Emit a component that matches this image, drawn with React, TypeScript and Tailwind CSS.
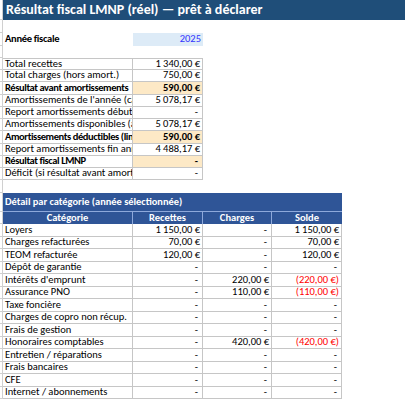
import React from "react";

const G = "border-[#c6c6c6]";

type CellProps = {
  w: string;
  className?: string;
  children?: React.ReactNode;
};

function Cell({ w, className = "", children }: CellProps) {
  return (
    <div
      className={`${w} shrink-0 h-full box-border overflow-hidden whitespace-nowrap flex items-center px-[2px] ${className}`}
    >
      {children}
    </div>
  );
}

function Margin({ line = true }: { line?: boolean }) {
  return (
    <div
      className={`w-[3px] shrink-0 h-full box-border border-r border-[#d0d0d0] ${line ? "border-b" : ""}`}
    />
  );
}

const summary: { label: string; value: string; hl?: boolean }[] = [
  { label: "Total recettes", value: "1 340,00 €" },
  { label: "Total charges (hors amort.)", value: "750,00 €" },
  { label: "Résultat avant amortissements", value: "590,00 €", hl: true },
  { label: "Amortissements de l'année (calculés)", value: "5 078,17 €" },
  { label: "Report amortissements début d'année", value: "-" },
  { label: "Amortissements disponibles (année + report)", value: "5 078,17 €" },
  { label: "Amortissements déductibles (limités)", value: "590,00 €", hl: true },
  { label: "Report amortissements fin année", value: "4 488,17 €" },
  { label: "Résultat fiscal LMNP", value: "-", hl: true },
  { label: "Déficit (si résultat avant amortissements < 0)", value: "-" },
];
const summaryH = [12, 12, 13, 12, 12, 12, 13, 12, 12, 12];

const detail: { cat: string; rec: string; ch: string; solde: string; neg?: boolean }[] = [
  { cat: "Loyers", rec: "1 150,00 €", ch: "-", solde: "1 150,00 €" },
  { cat: "Charges refacturées", rec: "70,00 €", ch: "-", solde: "70,00 €" },
  { cat: "TEOM refacturée", rec: "120,00 €", ch: "-", solde: "120,00 €" },
  { cat: "Dépôt de garantie", rec: "-", ch: "-", solde: "-" },
  { cat: "Intérêts d'emprunt", rec: "-", ch: "220,00 €", solde: "(220,00 €)", neg: true },
  { cat: "Assurance PNO", rec: "-", ch: "110,00 €", solde: "(110,00 €)", neg: true },
  { cat: "Taxe foncière", rec: "-", ch: "-", solde: "-" },
  { cat: "Charges de copro non récup.", rec: "-", ch: "-", solde: "-" },
  { cat: "Frais de gestion", rec: "-", ch: "-", solde: "-" },
  { cat: "Honoraires comptables", rec: "-", ch: "420,00 €", solde: "(420,00 €)", neg: true },
  { cat: "Entretien / réparations", rec: "-", ch: "-", solde: "-" },
  { cat: "Frais bancaires", rec: "-", ch: "-", solde: "-" },
  { cat: "CFE", rec: "-", ch: "-", solde: "-" },
  { cat: "Internet / abonnements", rec: "-", ch: "-", solde: "-" },
];

function Val({ v }: { v: string }) {
  return v === "-" ? <span className="pr-[2px]">-</span> : <span>{v}</span>;
}

export default function App() {
  return (
    <div
      className="w-[405px] h-[400px] overflow-hidden bg-white text-black text-[10.5px] leading-none"
      style={{ fontFamily: "Carlito, Lato, 'Liberation Sans', sans-serif" }}
    >
      {/* Title row */}
      <div className="flex h-[20px]">
        <Margin />
        <div className="flex-1 bg-[#1f4e79] text-white font-bold text-[14px] flex items-center pl-[3px]">
          Résultat fiscal LMNP (réel) — prêt à déclarer
        </div>
      </div>
      {/* empty */}
      <div className="flex h-[13px]">
        <Margin />
      </div>
      {/* Année fiscale */}
      <div className="flex h-[13px]">
        <Margin />
        <Cell w="w-[130px]" className="font-bold tracking-[-0.3px]">Année fiscale</Cell>
        <Cell w="w-[70px]" className="bg-[#ddebf7] justify-end text-[#3333ff]">2025</Cell>
      </div>
      <div className="flex h-[12px]">
        <Margin />
      </div>

      {/* Summary table */}
      {summary.map((r, i) => (
        <div key={r.label} className="flex" style={{ height: summaryH[i] }}>
          <Margin />
          <Cell
            w="w-[130px]"
            className={`border-r border-b ${G} ${i === 0 ? "border-t" : ""} ${r.hl ? "font-bold tracking-[-0.4px]" : ""}`}
          >
            {r.label}
          </Cell>
          <Cell
            w="w-[70px]"
            className={`border-r border-b ${G} ${i === 0 ? "border-t" : ""} justify-end ${r.hl ? "font-bold bg-[#fde9c6]" : ""}`}
          >
            <Val v={r.value} />
          </Cell>
        </div>
      ))}

      <div className="flex h-[13px]">
        <Margin />
      </div>

      {/* Detail header bar */}
      <div className="flex h-[19px]">
        <Margin />
        <div className="w-[339px] bg-[#2f5597] text-white font-bold text-[10.4px] flex items-center pl-[2px] border-b border-[#8ea9db]">
          Détail par catégorie (année sélectionnée)
        </div>
      </div>
      <div className="flex h-[12px]">
        <Margin />
        <Cell w="w-[130px]" className="bg-[#2f5597] text-white font-bold justify-center border-r border-[#8ea9db]">
          Catégorie
        </Cell>
        <Cell w="w-[70px]" className="bg-[#2f5597] text-white font-bold justify-center border-r border-[#8ea9db]">
          Recettes
        </Cell>
        <Cell w="w-[69px]" className="bg-[#2f5597] text-white font-bold justify-center border-r border-[#8ea9db]">
          Charges
        </Cell>
        <Cell w="w-[70px]" className="bg-[#2f5597] text-white font-bold justify-center">
          Solde
        </Cell>
      </div>

      {detail.map((r, i) => (
        <div key={r.cat} className="flex" style={{ height: i % 2 === 0 ? 13 : 12 }}>
          <Margin />
          <Cell w="w-[130px]" className={`border-r border-b ${G}`}>
            {r.cat}
          </Cell>
          <Cell w="w-[70px]" className={`border-r border-b ${G} justify-end`}>
            <Val v={r.rec} />
          </Cell>
          <Cell w="w-[69px]" className={`border-r border-b ${G} justify-end`}>
            <Val v={r.ch} />
          </Cell>
          <Cell w="w-[70px]" className={`border-r border-b ${G} justify-end ${r.neg ? "text-[#ff0000]" : ""}`}>
            <Val v={r.solde} />
          </Cell>
        </div>
      ))}
    </div>
  );
}
